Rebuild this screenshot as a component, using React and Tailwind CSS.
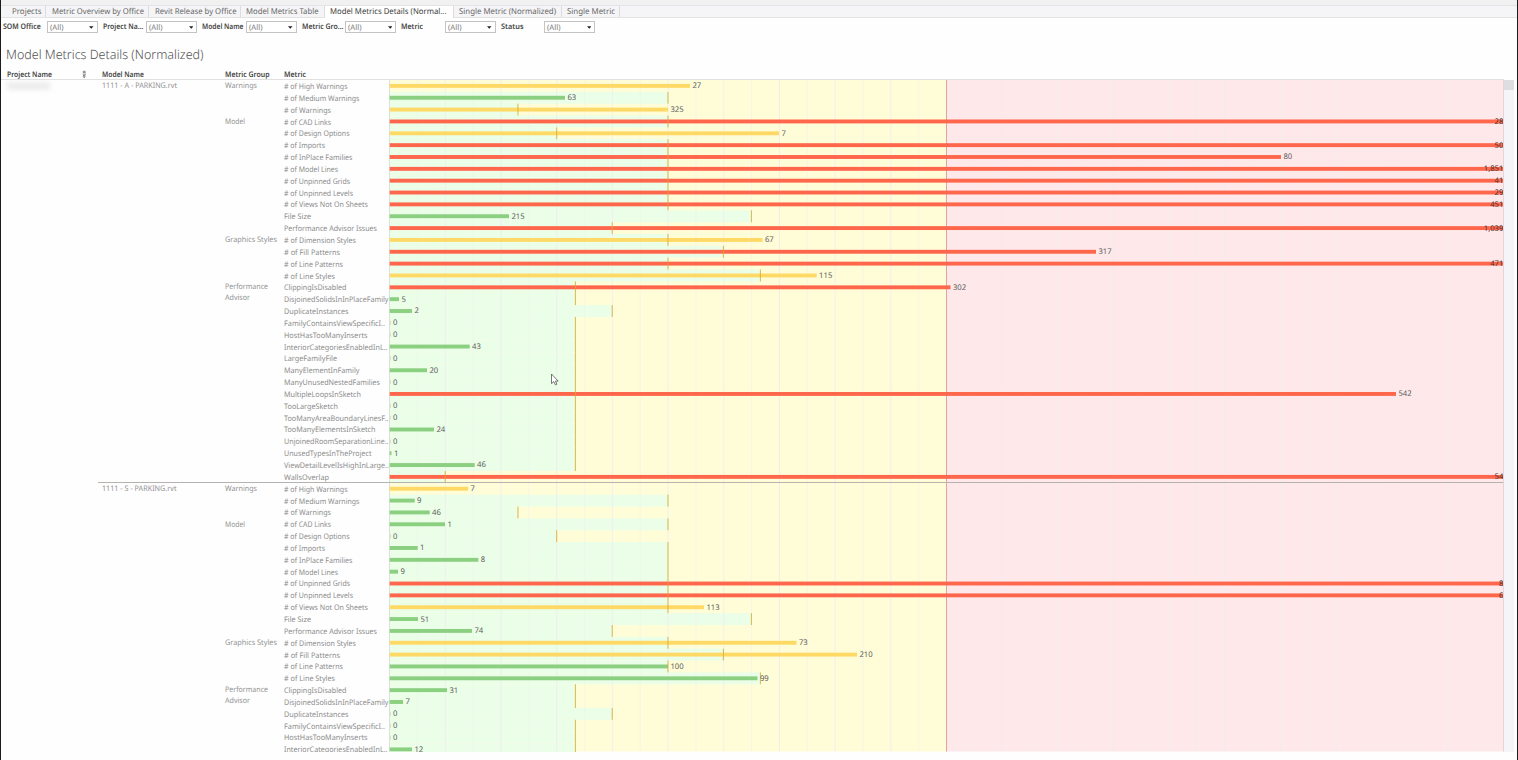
import React from "react";

const ROW = 11.848;
const X0 = 389.7;
const RED_AT = 946.5;
const END = 1503.4;
const TOP = 80;

const COLORS = { g: "#8bcf80", y: "#ffd966", r: "#ff674d" };

// [metric, threshold x, first model bar, second model bar]; bar = [label, end x, status]
const METRICS = [
  ["# of High Warnings", 0, ["27", 690, "y"], ["7", 468, "y"], 63.5],
  ["# of Medium Warnings", 668, ["63", 565, "g"], ["9", 414.7, "g"], 75.5],
  ["# of Warnings", 518, ["325", 668, "y"], ["46", 429.7, "g"], 47],
  ["# of CAD Links", 668, ["28", 0, "r"], ["1", 445, "g"], 47],
  ["# of Design Options", 556.7, ["7", 779, "y"], ["0", 390, "g"], 65.5],
  ["# of Imports", 668, ["50", 0, "r"], ["1", 417.7, "g"], 41],
  ["# of InPlace Families", 668, ["80", 1281, "r"], ["8", 478.3, "g"], 68.5],
  ["# of Model Lines", 668, ["1,851", 0, "r"], ["9", 398, "g"], 54],
  ["# of Unpinned Grids", 668, ["41", 0, "r"], ["8", 0, "r"], 66],
  ["# of Unpinned Levels", 668, ["29", 0, "r"], ["6", 0, "r"], 69],
  ["# of Views Not On Sheets", 668, ["451", 0, "r"], ["113", 704, "y"], 84],
  ["File Size", 751.5, ["215", 509, "g"], ["51", 418, "g"], 27],
  ["Performance Advisor Issues", 612.3, ["1,039", 0, "r"], ["74", 472, "g"], 93],
  ["# of Dimension Styles", 668, ["67", 762.5, "y"], ["73", 796.5, "y"], 72],
  ["# of Fill Patterns", 723.5, ["317", 1096, "r"], ["210", 857, "y"], 56],
  ["# of Line Patterns", 668, ["471", 0, "r"], ["100", 668, "g"], 59],
  ["# of Line Styles", 760.5, ["115", 816.7, "y"], ["99", 757.5, "g"], 51],
  ["ClippingIsDisabled", 575.5, ["302", 950.5, "r"], ["31", 447, "g"], 62.5],
  ["DisjoinedSolidsInInPlaceFamily", 575.5, ["5", 399, "g"], ["7", 403, "g"], 104.5],
  ["DuplicateInstances", 612.3, ["2", 412, "g"], ["0", 390, "g"], 64.5],
  ["FamilyContainsViewSpecificI..", 575.5, ["0", 390, "g"], ["0", 390, "g"], 101],
  ["HostHasTooManyInserts", 575.5, ["0", 390, "g"], ["0", 390, "g"], 83.5],
  ["InteriorCategoriesEnabledInL..", 575.5, ["43", 469.7, "g"], ["12", 412, "g"], 103.5],
  ["LargeFamilyFile", 575.5, ["0", 390, "g"], null, 53],
  ["ManyElementInFamily", 575.5, ["20", 427, "g"], null, 75.5],
  ["ManyUnusedNestedFamilies", 575.5, ["0", 390, "g"], null, 96],
  ["MultipleLoopsInSketch", 575.5, ["542", 1396, "r"], null, 77],
  ["TooLargeSketch", 575.5, ["0", 390, "g"], null, 54],
  ["TooManyAreaBoundaryLinesF..", 575.5, ["0", 390, "g"], null, 104.5],
  ["TooManyElementsInSketch", 575.5, ["24", 434, "g"], null, 91.5],
  ["UnjoinedRoomSeparationLine..", 575.5, ["0", 390, "g"], null, 104.5],
  ["UnusedTypesInTheProject", 575.5, ["1", 391.5, "g"], null, 87.5],
  ["ViewDetailLevelIsHighInLarge..", 575.5, ["46", 474.7, "g"], null, 105],
  ["WallsOverlap", 445.3, ["54", 0, "r"], null, 45],
];

const GROUPS_A = [
  { name: "Warnings", rows: 3 },
  { name: "Model", rows: 10 },
  { name: "Graphics Styles", rows: 4 },
  { name: "Performance Advisor", rows: 17 },
];
const GROUPS_B = [
  { name: "Warnings", rows: 3 },
  { name: "Model", rows: 10 },
  { name: "Graphics Styles", rows: 4 },
  { name: "Performance Advisor", rows: 6 },
];

const SECOND = METRICS.filter((m) => m[3]);
const ROWS = [
  ...METRICS.map(([name, t, bar, , w]) => ({ name, t, bar, w })),
  ...SECOND.map(([name, t, , bar, w]) => ({ name, t, bar, w })),
];

const TABS = [
  ["Projects", "w-[40px]", 29.5],
  ["Metric Overview by Office", "w-[103px]", 92],
  ["Revit Release by Office", "w-[91.5px]", 81.5],
  ["Model Metrics Table", "w-[84.3px]", 72.5],
  ["Model Metrics Details (Normal...", "w-[129px]", 116.5],
  ["Single Metric (Normalized)", "w-[108px]", 97],
  ["Single Metric", "w-[58.7px]", 48],
];

const FILTERS = [
  ["SOM Office", 37.8],
  ["Project Na...", 40.5],
  ["Model Name", 41.5],
  ["Metric Gro...", 41.5],
  ["Metric", 22],
  ["Status", 22.5],
];

// A single line of text set to a fixed measure.
function Line({ children, w, size, weight = 400, fill, h = 12, base = 9 }) {
  return (
    <svg width={w + 2} height={h} className="block shrink-0 overflow-visible">
      <text
        x="0"
        y={base}
        textLength={w}
        lengthAdjust="spacingAndGlyphs"
        textRendering="geometricPrecision"
        fontSize={size}
        fontWeight={weight}
        fill={fill}
      >
        {children}
      </text>
    </svg>
  );
}

function labelWidth(s) {
  return s.replace(",", "").length * 4.4 + (s.includes(",") ? 2 : 0);
}

function Chart() {
  const h = 671.5;
  return (
    <svg width="1115" height={h} viewBox={`389 ${TOP} 1115 ${h}`} className="block shrink-0 overflow-hidden">
      <rect x={X0} y={TOP} width={RED_AT - X0} height={h} fill="#fefdd7" />
      <rect x={RED_AT} y={TOP} width={END - RED_AT} height={h} fill="#fee8ea" />
      {ROWS.map((r, i) =>
        r.t ? <rect key={i} x={X0} y={TOP + i * ROW} width={r.t - X0} height={ROW + 0.05} fill="#ebfee8" /> : null
      )}
      {Array.from({ length: 39 }, (_, k) => (
        <rect
          key={k}
          x={X0 + (k + 1) * 27.84 - 0.5}
          y={TOP}
          width="1"
          height={h}
          fill={k % 2 ? "#f0ecf0" : "#f3f0f0"}
          opacity={k % 2 ? 0.85 : 0.5}
        />
      ))}
      <rect x="389" y={TOP} width="1" height={h} fill="#dcdfda" />
      {ROWS.map((r, i) => {
        const cy = TOP + i * ROW + 5.95;
        const [label, end, status] = r.bar;
        const full = end === 0;
        const stop = full ? END : end;
        const w = labelWidth(label);
        return (
          <g key={i}>
            {stop > 390 && <rect x={X0} y={cy - 2} width={stop - X0} height="3.9" fill={COLORS[status]} />}
            {r.t ? (
              <rect x={r.t - 0.6} y={TOP + i * ROW} width="1.1" height={ROW} fill="#d6a92f" opacity="0.75" />
            ) : null}
            {stop === 390 && <rect x="390" y={cy - 2} width="1" height="4" fill="#cfe6cc" />}
            <text
              x={full ? END - w : stop + (stop === 390 ? 2.9 : 2.4)}
              y={cy + 2.4}
              textLength={w}
              lengthAdjust="spacingAndGlyphs"
              textRendering="geometricPrecision"
              fontSize="7.8"
              fill={full ? "#50302c" : "#5c5c5c"}
            >
              {label}
            </text>
          </g>
        );
      })}
      <rect x="946" y={TOP} width="1" height={h} fill="#d9735f" opacity="0.6" />
      <rect x="389" y="482" width="1115" height="1" fill="#b5b2b0" />
      <rect x="1503" y={TOP} width="1" height={h} fill="#e2d6d6" />
      <path
        d="M551.5 374v9.6l2.3-2 1.6 3.3 1.5-.7-1.5-3.1h2.8z"
        fill="#fff"
        stroke="#555"
        strokeWidth="0.8"
      />
    </svg>
  );
}

function GroupColumn({ groups }) {
  return groups.map((g) => (
    <div key={g.name} className="shrink-0" style={{ height: g.rows * ROW }}>
      {g.name === "Performance Advisor" ? (
        <>
          <Line w={43} size={7.7} fill="#929292" h={10} base={8.4}>Performance</Line>
          <Line w={25} size={7.7} fill="#929292" h={10} base={8.8}>Advisor</Line>
        </>
      ) : (
        <Line
          w={g.name === "Warnings" ? 32 : g.name === "Model" ? 20 : 52}
          size={7.7}
          fill="#929292"
          base={8.3}
        >
          {g.name}
        </Line>
      )}
    </div>
  ));
}

export default function App() {
  return (
    <div className="flex h-[760px] w-[1518px] flex-col overflow-hidden border-x border-[#1c1c1c] bg-[#fefefe] font-['Noto_Sans','Open_Sans',sans-serif]">
      <div className="h-[5px] shrink-0 bg-[#f1f1f2]" />
      <nav className="flex h-[13px] shrink-0 border-y border-[#e4e4e6] bg-[#f5f5f7] pl-[5px]">
        {TABS.map(([name, width, w], i) => (
          <div
            key={name}
            className={
              "flex shrink-0 border-r border-[#dcdcde] pl-[5.5px] " +
              width +
              (i === 4 ? " h-[12px] bg-white" : "")
            }
          >
            <Line w={w} size={8.1} fill={i === 4 ? "#3c3c3c" : "#686868"} h={11} base={8.1}>
              {name}
            </Line>
          </div>
        ))}
      </nav>
      <div className="flex h-[29px] shrink-0 gap-[5px] pt-[3px] pl-[2.3px]">
        {FILTERS.map(([name, w]) => (
          <div key={name} className="flex shrink-0">
            <div className="w-[43.5px] shrink-0">
              <Line w={w} size={7.6} weight={600} fill="#444" base={7.6}>
                {name}
              </Line>
            </div>
            <div className="flex h-[12px] w-[51px] items-center justify-between border border-[#c4c4c4] bg-white pr-[3px] pl-[2px]">
              <Line w={13.5} size={7.8} fill="#7c7c7c" h={10} base={8}>
                (All)
              </Line>
              <svg width="4.5" height="3" viewBox="0 0 5 3">
                <path d="M0 0h5L2.5 3z" fill="#222" />
              </svg>
            </div>
          </div>
        ))}
      </div>
      <h1 className="h-[23px] shrink-0 pl-[5px]">
        <Line w={197.5} size={12.8} weight={300} fill="#505050" h={20} base={12.3}>
          Model Metrics Details (Normalized)
        </Line>
      </h1>
      <div className="flex h-[10px] w-[1503px] shrink-0 border-b border-[#e0e0e0] pl-[6px]">
        <div className="flex w-[94.5px] shrink-0 gap-[28px]">
          <Line w={45} size={7.6} weight={600} fill="#444" h={9} base={7.3}>Project Name</Line>
          <svg width="5" height="8" viewBox="0 0 5 8" fill="none" stroke="#666" strokeWidth="0.7">
            <path d="M1.3 3.2V1.2h1.8v2M1.3 2.3h1.8M.8 4.2h2.8L1 6h2.4M2.2 5.5v2M1.2 6.7l1 1 1-1" />
          </svg>
        </div>
        <div className="w-[123.5px] shrink-0">
          <Line w={42} size={7.6} weight={600} fill="#444" h={9} base={7.3}>Model Name</Line>
        </div>
        <div className="w-[59px] shrink-0">
          <Line w={44.5} size={7.6} weight={600} fill="#444" h={9} base={7.3}>Metric Group</Line>
        </div>
        <Line w={22} size={7.6} weight={600} fill="#444" h={9} base={7.3}>Metric</Line>
      </div>
      <div className="flex h-[671.5px] shrink-0 overflow-hidden">
        <div className="w-[96.5px] shrink-0 pt-[2px] pl-[6px]">
          <div className="h-[8px] w-[43px] bg-[#ededed] blur-[2px]" />
        </div>
        <div className="flex w-[186.5px] shrink-0 flex-col">
          <div className="flex h-[403px] shrink-0 border-b border-[#b5b2b0] pl-[4px]">
            <div className="w-[123.3px] shrink-0">
              <Line w={75} size={7.7} fill="#929292" base={8.3}>1111 - A - PARKING.rvt</Line>
            </div>
            <div className="flex flex-col">
              <GroupColumn groups={GROUPS_A} />
            </div>
          </div>
          <div className="flex shrink-0 pl-[4px]">
            <div className="w-[123.3px] shrink-0">
              <Line w={74.5} size={7.7} fill="#929292" base={8.3}>1111 - S - PARKING.rvt</Line>
            </div>
            <div className="flex flex-col">
              <GroupColumn groups={GROUPS_B} />
            </div>
          </div>
        </div>
        <div className="flex w-[105px] shrink-0 flex-col bg-[linear-gradient(#b5b2b0,#b5b2b0)] bg-[length:100%_1px] bg-[position:0_402px] bg-no-repeat">
          {ROWS.map((r, i) => (
            <div key={i} className="h-[11.848px] shrink-0">
              <Line w={r.w} size={7.7} fill="#8c8c8c" base={8.9}>
                {r.name}
              </Line>
            </div>
          ))}
        </div>
        <Chart />
        <div className="h-full w-[10px] shrink-0 bg-[#f5f5f7]">
          <div className="h-[10px] w-full bg-[#dedee0]" />
        </div>
      </div>
    </div>
  );
}
